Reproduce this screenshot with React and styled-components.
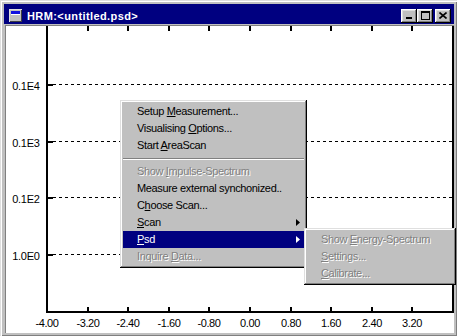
import React from 'react'
import styled, { createGlobalStyle } from 'styled-components'

const GlobalStyle = createGlobalStyle`
  html, body { margin: 0; padding: 0; background: #c0c0c0; }
  body { font-family: "Liberation Sans", Arial, sans-serif; font-size: 11px; }
`

const Window = styled.div`
  position: relative;
  width: 457px;
  height: 336px;
  box-sizing: border-box;
  padding: 4px 3px 3px 4px;
  background: #c0c0c0;
  box-shadow: inset 1px 1px 0 #dfdfdf, inset 2px 2px 0 #fff, inset -1px -1px 0 #808080;
  display: flex;
  flex-direction: column;
  overflow: hidden;
`

const TitleBar = styled.div`
  height: 20px;
  flex: none;
  box-sizing: border-box;
  padding: 3px 3px 0 5px;
  background: #000080;
  display: flex;
  align-items: center;
  gap: 5px;
`

const TitleText = styled.div`
  flex: 1;
  color: #fff;
  font-weight: bold;
  font-size: 11px;
  letter-spacing: 0.4px;
  white-space: nowrap;
`

const Controls = styled.div`
  display: flex;
  align-items: center;
`

const CaptionButton = styled.div`
  width: 16px;
  height: 14px;
  margin-left: ${p => (p.$gap ? '2px' : '0')};
  background: #c0c0c0;
  box-shadow: inset -1px -1px 0 #000, inset 1px 1px 0 #fff, inset -2px -2px 0 #808080, inset 2px 2px 0 #dfdfdf;
  display: flex;
  align-items: center;
  justify-content: center;
  svg { display: block; }
`

const Client = styled.div`
  flex: 1;
  margin: 1px 0 0 1px;
  border-top: 1px solid #808080;
  border-left: 1px solid #808080;
  background: #fff;
  svg { display: block; }
`

const Menu = styled.div`
  position: absolute;
  left: ${p => p.$left}px;
  top: ${p => p.$top}px;
  width: ${p => p.$width}px;
  box-sizing: border-box;
  padding: 3px;
  background: #c0c0c0;
  box-shadow: inset -1px -1px 0 #000, inset 1px 1px 0 #dfdfdf, inset -2px -2px 0 #808080, inset 2px 2px 0 #fff;
`

const MenuItem = styled.div`
  height: 17px;
  line-height: 17px;
  padding: 0 4px 0 14px;
  display: flex;
  align-items: center;
  white-space: nowrap;
  font-size: 11px;
  letter-spacing: -0.35px;
  background: ${p => (p.$active ? '#000080' : 'transparent')};
  color: ${p => (p.$active ? '#fff' : p.$disabled ? '#808080' : '#000')};
  text-shadow: ${p => (p.$disabled && !p.$active ? '1px 1px 0 #fff' : 'none')};
`

const Mnemonic = styled.span`
  text-decoration: underline;
`

const Arrow = styled.svg`
  margin-left: auto;
  fill: currentColor;
`

const Separator = styled.div`
  margin: 4px 0 3px;
  border-top: 1px solid #808080;
  border-bottom: 1px solid #fff;
`

const Label = ({ text }) => {
  const i = text.indexOf('&')
  if (i < 0) return <span>{text}</span>
  return (
    <span>
      {text.slice(0, i)}
      <Mnemonic>{text[i + 1]}</Mnemonic>
      {text.slice(i + 2)}
    </span>
  )
}

const mainItems = [
  { label: 'Setup &Measurement...' },
  { label: 'Visualising &Options...' },
  { label: 'Start &AreaScan' },
  { sep: true },
  { label: 'Show &Impulse-Spectrum', disabled: true },
  { label: 'Measure external synchonized..' },
  { label: 'C&hoose Scan...' },
  { label: '&Scan', sub: true },
  { label: '&Psd', sub: true, active: true },
  { label: 'Inquire &Data...', disabled: true },
]

const psdItems = [
  { label: 'Show &Energy-Spectrum', disabled: true },
  { label: '&Settings...', disabled: true },
  { label: '&Calibrate...', disabled: true },
]

const renderItems = items =>
  items.map((it, i) =>
    it.sep ? (
      <Separator key={i} />
    ) : (
      <MenuItem key={i} $active={it.active} $disabled={it.disabled}>
        <Label text={it.label} />
        {it.sub && (
          <Arrow width="4" height="7" viewBox="0 0 4 7">
            <polygon points="0,0 4,3.5 0,7" />
          </Arrow>
        )}
      </MenuItem>
    )
  )

const X0 = 40
const XSTEP = 40.6
const AXIS_Y = 285
const xLabels = ['-4.00', '-3.20', '-2.40', '-1.60', '-0.80', '0.00', '0.80', '1.60', '2.40', '3.20']
const grid = [
  { y: 58, label: '0.1E4' },
  { y: 115, label: '0.1E3' },
  { y: 171, label: '0.1E2' },
  { y: 228, label: '1.0E0' },
]

const Chart = () => (
  <svg width="448" height="307" viewBox="0 0 448 307" shapeRendering="crispEdges">
    <rect x={X0} y="0" width="2" height={AXIS_Y + 2} fill="#000" />
    <rect x="446" y="0" width="2" height={AXIS_Y + 2} fill="#000" />
    <rect x={X0} y={AXIS_Y} width={408} height="2" fill="#000" />
    {xLabels.map((t, i) => {
      const tx = Math.round(X0 + XSTEP * i)
      return (
        <g key={t}>
          {i > 0 && <rect x={tx} y="0" width="2" height="5" fill="#000" />}
          {i > 0 && <rect x={tx} y={AXIS_Y - 4} width="2" height="4" fill="#000" />}
          <text
            x={tx + 1}
            y="301"
            textAnchor="middle"
            fontFamily="Liberation Sans, Arial, sans-serif"
            fontSize="11"
            letterSpacing="-0.4"
          >
            {t}
          </text>
        </g>
      )
    })}
    {grid.map(g => (
      <g key={g.label}>
        <rect x={X0 + 2} y={g.y} width="5" height="2" fill="#000" />
        <line x1={X0 + 7} x2="446" y1={g.y + 0.5} y2={g.y + 0.5} stroke="#000" strokeDasharray="3 3" />
        <text
          x="33.5"
          y={g.y + 6}
          textAnchor="end"
          fontFamily="Liberation Sans, Arial, sans-serif"
          fontSize="11"
          letterSpacing="-0.3"
        >
          {g.label}
        </text>
      </g>
    ))}
  </svg>
)

const App = () => (
  <>
    <GlobalStyle />
    <Window>
      <TitleBar>
        <svg width="13" height="13" viewBox="0 0 13 13" shapeRendering="crispEdges">
          <rect x="0" y="0" width="13" height="13" fill="#dfdfdf" />
          <rect x="1" y="1" width="12" height="12" fill="#404040" />
          <rect x="1" y="1" width="11" height="11" fill="#c0c0c0" />
          <rect x="2" y="2" width="9" height="3" fill="#1010e0" />
          <rect x="2" y="5" width="9" height="1" fill="#fff" />
        </svg>
        <TitleText>HRM:&lt;untitled.psd&gt;</TitleText>
        <Controls>
          <CaptionButton>
            <svg width="8" height="7" viewBox="0 0 8 7" shapeRendering="crispEdges">
              <rect x="1" y="5" width="6" height="2" fill="#000" />
            </svg>
          </CaptionButton>
          <CaptionButton>
            <svg width="9" height="9" viewBox="0 0 9 9" shapeRendering="crispEdges">
              <rect x="0" y="0" width="9" height="2" fill="#000" />
              <rect x="0" y="0" width="1" height="9" fill="#000" />
              <rect x="8" y="0" width="1" height="9" fill="#000" />
              <rect x="0" y="8" width="9" height="1" fill="#000" />
            </svg>
          </CaptionButton>
          <CaptionButton $gap>
            <svg width="8" height="7" viewBox="0 0 8 7">
              <path d="M0.5 0.5 L7.5 6.5 M7.5 0.5 L0.5 6.5" stroke="#000" strokeWidth="1.6" />
            </svg>
          </CaptionButton>
        </Controls>
      </TitleBar>
      <Client>
        <Chart />
      </Client>
      <Menu $left={120} $top={100} $width={187}>
        {renderItems(mainItems)}
      </Menu>
      <Menu $left={304} $top={228} $width={152}>
        {renderItems(psdItems)}
      </Menu>
    </Window>
  </>
)

export default App
